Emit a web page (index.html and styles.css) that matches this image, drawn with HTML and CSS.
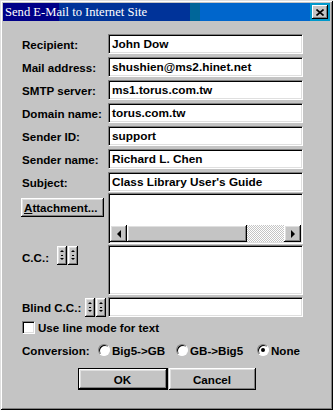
FILE: index.html
```html
<!DOCTYPE html>
<html>
<head>
  <title>Send E-Mail to Internet Site</title>
  <link rel="stylesheet" href="styles.css">
</head>
<body>
  <div class="window">
    <div class="titlebar">
      <span class="title">Send E-Mail to Internet Site</span>
      <span class="close">
        <svg width="8" height="7" viewBox="0 0 8 7"><path d="M0.5 0.5 L7.5 6.5 M7.5 0.5 L0.5 6.5" stroke="#000" stroke-width="1.6"/></svg>
      </span>
    </div>

    <div class="form">
      <div class="row"><span class="label">Recipient:</span><div class="field">John Dow</div></div>
      <div class="row"><span class="label">Mail address:</span><div class="field">shushien@ms2.hinet.net</div></div>
      <div class="row"><span class="label">SMTP server:</span><div class="field">ms1.torus.com.tw</div></div>
      <div class="row"><span class="label">Domain name:</span><div class="field">torus.com.tw</div></div>
      <div class="row"><span class="label">Sender ID:</span><div class="field">support</div></div>
      <div class="row"><span class="label">Sender name:</span><div class="field">Richard L. Chen</div></div>
      <div class="row"><span class="label">Subject:</span><div class="field">Class Library User's Guide</div></div>

      <div class="row attach-row">
        <div class="label top">
          <button class="btn attach"><u>A</u>ttachment...</button>
        </div>
        <div class="listbox">
          <div class="list-area"></div>
          <div class="hscroll">
            <span class="sbtn"><span class="arrow-left"></span></span>
            <span class="thumb"></span>
            <span class="track"></span>
            <span class="sbtn"><span class="arrow-right"></span></span>
          </div>
        </div>
      </div>

      <div class="row cc-row">
        <div class="label top cc-label">
          <span class="cc-text">C.C.:</span>
          <span class="spin"></span><span class="spin"></span>
        </div>
        <div class="field memo"></div>
      </div>

      <div class="row blind-row">
        <div class="label">
          <span class="blind-text">Blind C.C.:</span>
          <span class="spin"></span><span class="spin"></span>
        </div>
        <div class="field"></div>
      </div>

      <div class="check-row"><span class="checkbox"></span>Use line mode for text</div>

      <div class="conv-row">
        <span class="conv-label">Conversion:</span>
        <span class="opt opt1"><span class="radio"></span>Big5-&gt;GB</span>
        <span class="opt opt2"><span class="radio"></span>GB-&gt;Big5</span>
        <span class="opt"><span class="radio checked"></span>None</span>
      </div>

      <div class="buttons">
        <button class="btn default">OK</button>
        <button class="btn cancel">Cancel</button>
      </div>
    </div>
  </div>
</body>
</html>
```

FILE: styles.css
```css
body {
  margin: 0;
  font-family: "Liberation Sans", Arial, sans-serif;
  font-size: 11.6px;
  font-weight: bold;
  color: #000;
}
.window {
  width: 333px;
  height: 410px;
  box-sizing: border-box;
  padding: 3px;
  background: #c4c4c4;
  box-shadow: inset 1px 1px #dfdfdf, inset -1px -1px #000, inset 2px 2px #fff, inset -2px -2px #808080;
}
.titlebar {
  height: 18px;
  display: flex;
  align-items: center;
  justify-content: space-between;
  background: linear-gradient(to right, #000088 0 56px, #003399 56px 187px, #006699 187px 197px, #0066cc 197px 307px, #0099cc 307px);
}
.title {
  color: #fff;
  font-family: "Liberation Serif", "Times New Roman", serif;
  font-weight: normal;
  font-size: 12.6px;
  padding-left: 2px;
}
.close {
  width: 16px;
  height: 14px;
  margin-right: 2px;
  display: flex;
  align-items: center;
  justify-content: center;
  background: #c4c4c4;
  box-shadow: inset -1px -1px #000, inset 1px 1px #fff, inset -2px -2px #808080;
}

.form {
  padding: 13px 0 0 19px;
}
.row {
  display: flex;
  margin-bottom: 3px;
}
.label {
  width: 86px;
  height: 20px;
  flex: none;
  display: flex;
  align-items: center;
}
.label.top {
  align-items: flex-start;
}
.field {
  width: 195px;
  height: 20px;
  box-sizing: border-box;
  background: #fff;
  border: 1px solid;
  border-color: #808080 #fff #fff #808080;
  box-shadow: inset 1px 1px #000, inset -1px -1px #dfdfdf;
  padding: 0 3px;
  font-size: 11.8px;
  line-height: 18px;
  white-space: nowrap;
}

/* raised look shared by buttons */
.btn, .sbtn, .thumb, .spin {
  background-color: #c4c4c4;
  box-shadow: inset -1px -1px #000, inset 1px 1px #fff, inset -2px -2px #808080, inset 2px 2px #dfdfdf;
}
.btn {
  border: none;
  padding: 0;
  font-family: inherit;
  font-size: 11.6px;
  font-weight: bold;
  color: #000;
}

.attach-row {
  margin-top: -2px;
  margin-bottom: 1px;
}
.attach {
  width: 83px;
  height: 19px;
  margin: 5px 0 0 -1px;
  text-align: left;
  padding-left: 3px;
}
.listbox {
  width: 195px;
  height: 51px;
  box-sizing: border-box;
  border: 1px solid;
  border-color: #808080 #fff #fff #808080;
  box-shadow: inset 1px 1px #000, inset -1px -1px #dfdfdf;
  padding: 1px;
  display: flex;
  flex-direction: column;
}
.list-area {
  flex: 1;
  background: #fff;
}
.hscroll {
  height: 17px;
  display: flex;
}
.sbtn {
  width: 17px;
  height: 17px;
  flex: none;
  display: flex;
  align-items: center;
  justify-content: center;
}
.arrow-left {
  border-top: 4px solid transparent;
  border-bottom: 4px solid transparent;
  border-right: 4px solid #000;
}
.arrow-right {
  border-top: 4px solid transparent;
  border-bottom: 4px solid transparent;
  border-left: 4px solid #000;
}
.thumb {
  width: 120px;
  flex: none;
}
.track {
  flex: 1;
  background: repeating-conic-gradient(#fff 0 25%, #c4c4c4 0 50%) 0 0 / 2px 2px;
}

.cc-row {
  margin-bottom: 2px;
}
.memo {
  height: 50px;
}
.cc-label {
  padding-top: 1px;
}
.cc-text {
  width: 35px;
  line-height: 23px;
}
.blind-text {
  width: 63px;
}
.spin {
  width: 10px;
  height: 19px;
  margin-right: 1px;
  background-image: url("data:image/svg+xml,%3Csvg xmlns='http://www.w3.org/2000/svg' width='10' height='19'%3E%3Cpath d='M3 6 L5 4 L7 6 Z M4 9 h2 v1 h-2 Z M3 12 L7 12 L5 14 Z' fill='%23000'/%3E%3C/svg%3E");
  background-repeat: no-repeat;
}

.check-row {
  display: flex;
  align-items: center;
  margin-top: 4px;
  height: 13px;
}
.checkbox {
  width: 13px;
  height: 13px;
  box-sizing: border-box;
  margin-right: 3px;
  background: #fff;
  border: 1px solid;
  border-color: #808080 #fff #fff #808080;
  box-shadow: inset 1px 1px #000, inset -1px -1px #dfdfdf;
}

.conv-row {
  display: flex;
  align-items: center;
  height: 14px;
  margin-top: 9px;
}
.conv-label {
  width: 76px;
}
.opt {
  display: flex;
  align-items: center;
}
.opt1 {
  width: 78px;
}
.opt2 {
  width: 81px;
}
.radio {
  width: 12px;
  height: 12px;
  box-sizing: border-box;
  border-radius: 50%;
  margin-right: 2px;
  background: #fff;
  border: 1px solid;
  border-color: #808080 #fff #fff #808080;
  box-shadow: inset 1px 1px #000;
  display: flex;
  align-items: center;
  justify-content: center;
}
.radio.checked::after {
  content: "";
  width: 4px;
  height: 4px;
  border-radius: 50%;
  background: #000;
}

.buttons {
  display: flex;
  justify-content: center;
  gap: 1px;
  margin: 11px 0 0 -19px;
}
.buttons .btn {
  height: 22px;
}
.default {
  width: 90px;
  border: 1px solid #000;
}
.cancel {
  width: 87px;
}
```
